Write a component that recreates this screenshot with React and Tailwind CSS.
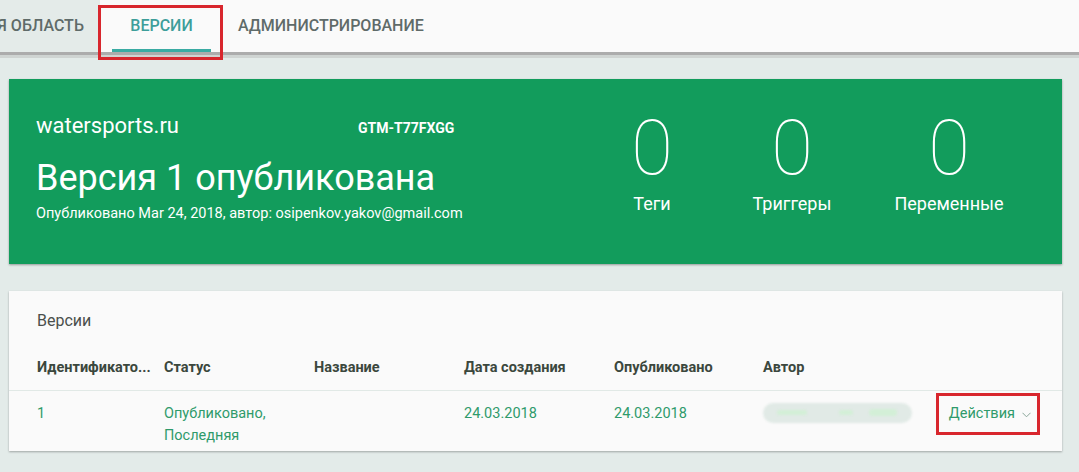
import React from "react";

function Counter({ value, label, w }) {
  return (
    <div className={`flex flex-col items-center ${w}`}>
      <div className="text-[76px] leading-[76px] font-thin">{value}</div>
      <div className="mt-[6px] text-[18px] leading-[24px]">{label}</div>
    </div>
  );
}

export default function App() {
  return (
    <div
      className="relative min-h-[472px] w-[1079px] bg-[#e3ebe9] overflow-hidden"
      style={{ fontFamily: "Roboto, 'Noto Sans', sans-serif" }}
    >
      {/* Tabs header */}
      <div className="flex h-[52px] bg-[#fafafa] overflow-hidden whitespace-nowrap text-[16px] font-medium uppercase">
        <div className="flex w-[100px] shrink-0 items-center justify-end overflow-hidden bg-[#e4ebe9] pr-4 text-[#5f6b69]">
          Рабочая область
        </div>
        <div className="relative flex w-[123px] shrink-0 items-center justify-center text-[#3d9e9a]">
          Версии
          <div className="absolute bottom-0 left-3 right-3 h-[3px] bg-[#3aaba3]" />
        </div>
        <div className="flex items-center px-[15px] text-[#5f6b69]">Администрирование</div>
      </div>
      <div className="h-[3px] bg-[#acacac]" />
      <div className="h-[3px] bg-[#cfd4d2]" />

      {/* Green summary card */}
      <div className="ml-[9px] mt-[21px] flex h-[185px] w-[1053px] bg-[#129c5c] text-white shadow-[0_1px_2px_rgba(0,0,0,0.35)]">
        <div className="flex flex-1 flex-col pl-[27px] pt-[34px]">
          <div className="flex items-baseline">
            <div className="w-[322px] text-[22px] leading-[26px]">watersports.ru</div>
            <div className="text-[14px] font-bold leading-[26px]">GTM-T77FXGG</div>
          </div>
          <div className="mt-[17px] text-[36px] leading-[40px]">Версия 1 опубликована</div>
          <div className="mt-[6px] text-[14.5px] leading-[20px]">
            Опубликовано Mar 24, 2018, автор: osipenkov.yakov@gmail.com
          </div>
        </div>
        <div className="flex items-start gap-[20px] pr-[36px] pt-[31px]">
          <Counter value="0" label="Теги" w="w-[120px]" />
          <Counter value="0" label="Триггеры" w="w-[120px]" />
          <Counter value="0" label="Переменные" w="w-[154px]" />
        </div>
      </div>

      {/* Versions table card */}
      <div className="ml-[9px] mt-[27px] w-[1053px] bg-[#fafafa] shadow-[0_1px_2px_rgba(0,0,0,0.3)]">
        <div className="px-[28px] pt-[18px] text-[16px] leading-[24px] text-[#4a4f4c]">Версии</div>
        <div className="mt-[25px] grid grid-cols-[127px_150px_150px_150px_149px_1fr_auto] pl-[28px] pr-[31px] pb-[12px] text-[14.5px] font-bold leading-[20px] text-[#3b473d]">
          <div>Идентификато...</div>
          <div>Статус</div>
          <div>Название</div>
          <div>Дата создания</div>
          <div>Опубликовано</div>
          <div>Автор</div>
          <div />
        </div>
        <div className="h-px bg-[#e1e9e6]" />
        <div className="grid grid-cols-[127px_150px_150px_150px_149px_1fr_auto] items-start pl-[28px] pr-[31px] pt-[12px] pb-[4px] text-[14.5px] leading-[22px] text-[#2f9a6b]">
          <div>1</div>
          <div>
            Опубликовано,
            <br />
            Последняя
          </div>
          <div />
          <div>24.03.2018</div>
          <div>24.03.2018</div>
          <div>
            <div className="relative h-[20px] w-[149px]">
              <div className="absolute inset-0 rounded-full bg-[#e1eae6] blur-[1px]" />
              <div className="absolute left-[14px] top-[7px] h-[5px] w-[30px] rounded-full bg-[#d3efd7] blur-[1px]" />
              <div className="absolute left-[76px] top-[7px] h-[5px] w-[14px] rounded-full bg-[#d3efd7] blur-[1px]" />
              <div className="absolute left-[106px] top-[6px] h-[7px] w-[28px] rounded-full bg-[#d3efd7] blur-[1px]" />
            </div>
          </div>
          <div className="flex h-[22px] items-center gap-[7px] text-[14.5px]">
            Действия
            <svg width="9" height="6" viewBox="0 0 9 6" className="mt-[1px]">
              <path d="M0.5 0.8 L4.5 4.8 L8.5 0.8" fill="none" stroke="#8aa69a" strokeWidth="1" />
            </svg>
          </div>
        </div>
      </div>

      {/* Red annotation boxes */}
      <div className="absolute left-[98px] top-[5px] h-[55px] w-[125px] border-[3px] border-[#d8262d]" />
      <div className="absolute left-[936px] top-[393px] h-[42px] w-[104px] border-[3px] border-[#d8262d]" />
    </div>
  );
}
